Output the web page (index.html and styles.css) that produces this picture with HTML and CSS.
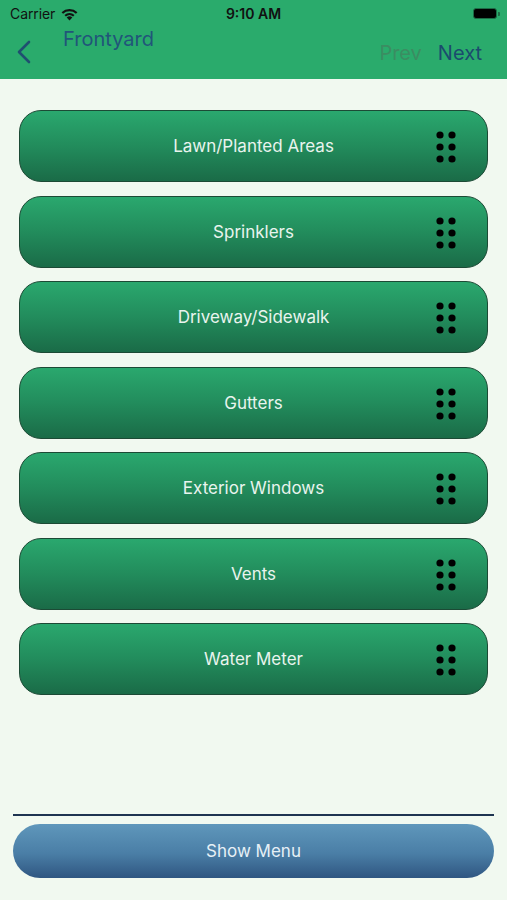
FILE: index.html
```html
<!DOCTYPE html>
<html>
<head>
<meta charset="utf-8">
<link rel="stylesheet" href="styles.css">
</head>
<body>
<div class="screen">
  <header class="header">
    <div class="status">
      <div class="status-left">
        <span class="carrier">Carrier</span>
        <svg class="wifi" width="19" height="14" viewBox="0 0 16 12">
          <path d="M8 11.5 L5.6 8.9 A3.6 3.6 0 0 1 10.4 8.9 Z" fill="#111"/>
          <path d="M3.7 6.9 A6.4 6.4 0 0 1 12.3 6.9 L11.1 8.2 A4.7 4.7 0 0 0 4.9 8.2 Z" fill="#111"/>
          <path d="M1.2 4.4 A10 10 0 0 1 14.8 4.4 L13.5 5.7 A8.2 8.2 0 0 0 2.5 5.7 Z" fill="#111"/>
        </svg>
      </div>
      <span class="time">9:10 AM</span>
      <div class="battery">
        <div class="battery-body"></div>
        <div class="battery-cap"></div>
      </div>
    </div>
    <nav class="navbar">
      <svg class="back" width="16" height="24" viewBox="0 0 16 24">
        <path d="M13 2 L3 12 L13 22" fill="none" stroke="#1f4f70" stroke-width="2.6" stroke-linecap="round" stroke-linejoin="round"/>
      </svg>
      <span class="title">Frontyard</span>
      <div class="nav-right">
        <span class="prev">Prev</span>
        <span class="next">Next</span>
      </div>
    </nav>
  </header>

  <main class="list">
    <div class="item"><span class="label">Lawn/Planted Areas</span><svg class="grip" width="22" height="34" viewBox="0 0 22 34"><circle cx="5" cy="5" r="3.6"/><circle cx="17" cy="5" r="3.6"/><circle cx="5" cy="17" r="3.6"/><circle cx="17" cy="17" r="3.6"/><circle cx="5" cy="29" r="3.6"/><circle cx="17" cy="29" r="3.6"/></svg></div>
    <div class="item"><span class="label">Sprinklers</span><svg class="grip" width="22" height="34" viewBox="0 0 22 34"><circle cx="5" cy="5" r="3.6"/><circle cx="17" cy="5" r="3.6"/><circle cx="5" cy="17" r="3.6"/><circle cx="17" cy="17" r="3.6"/><circle cx="5" cy="29" r="3.6"/><circle cx="17" cy="29" r="3.6"/></svg></div>
    <div class="item"><span class="label">Driveway/Sidewalk</span><svg class="grip" width="22" height="34" viewBox="0 0 22 34"><circle cx="5" cy="5" r="3.6"/><circle cx="17" cy="5" r="3.6"/><circle cx="5" cy="17" r="3.6"/><circle cx="17" cy="17" r="3.6"/><circle cx="5" cy="29" r="3.6"/><circle cx="17" cy="29" r="3.6"/></svg></div>
    <div class="item"><span class="label">Gutters</span><svg class="grip" width="22" height="34" viewBox="0 0 22 34"><circle cx="5" cy="5" r="3.6"/><circle cx="17" cy="5" r="3.6"/><circle cx="5" cy="17" r="3.6"/><circle cx="17" cy="17" r="3.6"/><circle cx="5" cy="29" r="3.6"/><circle cx="17" cy="29" r="3.6"/></svg></div>
    <div class="item"><span class="label">Exterior Windows</span><svg class="grip" width="22" height="34" viewBox="0 0 22 34"><circle cx="5" cy="5" r="3.6"/><circle cx="17" cy="5" r="3.6"/><circle cx="5" cy="17" r="3.6"/><circle cx="17" cy="17" r="3.6"/><circle cx="5" cy="29" r="3.6"/><circle cx="17" cy="29" r="3.6"/></svg></div>
    <div class="item"><span class="label">Vents</span><svg class="grip" width="22" height="34" viewBox="0 0 22 34"><circle cx="5" cy="5" r="3.6"/><circle cx="17" cy="5" r="3.6"/><circle cx="5" cy="17" r="3.6"/><circle cx="17" cy="17" r="3.6"/><circle cx="5" cy="29" r="3.6"/><circle cx="17" cy="29" r="3.6"/></svg></div>
    <div class="item"><span class="label">Water Meter</span><svg class="grip" width="22" height="34" viewBox="0 0 22 34"><circle cx="5" cy="5" r="3.6"/><circle cx="17" cy="5" r="3.6"/><circle cx="5" cy="17" r="3.6"/><circle cx="17" cy="17" r="3.6"/><circle cx="5" cy="29" r="3.6"/><circle cx="17" cy="29" r="3.6"/></svg></div>
  </main>

  <footer class="footer">
    <div class="divider"></div>
    <button class="menu-btn">Show Menu</button>
  </footer>
</div>
</body>
</html>
```

FILE: styles.css
```css
* { box-sizing: border-box; }

html, body {
  margin: 0;
  padding: 0;
}

body {
  font-family: Inter, "Noto Sans", "Liberation Sans", sans-serif;
  background: #f1f9f0;
}

.screen {
  width: 507px;
  height: 900px;
  display: flex;
  flex-direction: column;
  background: #f1f9f0;
}

.header {
  height: 79px;
  background: #2aab6c;
  display: flex;
  flex-direction: column;
}

.status {
  height: 27px;
  display: flex;
  align-items: center;
  justify-content: space-between;
  padding: 0 7px 0 10px;
  position: relative;
}

.status-left {
  display: flex;
  align-items: center;
  gap: 5px;
}

.carrier {
  font-size: 14px;
  color: #111;
  letter-spacing: -0.1px;
}

.time {
  position: absolute;
  left: 0;
  right: 0;
  text-align: center;
  font-size: 14px;
  font-weight: 600;
  color: #111;
}

.battery {
  display: flex;
  align-items: center;
  gap: 1px;
}

.battery-body {
  width: 24px;
  height: 11px;
  border-radius: 3px;
  background: #000;
  border: 1px solid #1d6b45;
}

.battery-cap {
  width: 2px;
  height: 4px;
  border-radius: 0 1px 1px 0;
  background: #1d6b45;
}

.navbar {
  flex: 1;
  display: flex;
  align-items: flex-start;
  padding: 0 25px 0 16px;
}

.back {
  margin-top: 13px;
}

.title {
  margin-left: 31px;
  margin-top: 0;
  font-size: 20px;
  color: #21557a;
}

.nav-right {
  margin-left: auto;
  margin-top: 14px;
  display: flex;
  gap: 16px;
  font-size: 20px;
}

.prev {
  color: #3b8d62;
}

.next {
  color: #1b4b6e;
}

.list {
  display: flex;
  flex-direction: column;
  gap: 13.5px;
  padding: 31px 19px 0 19px;
}

.item {
  height: 72px;
  border-radius: 22px;
  border: 1px solid #1c4a35;
  background: linear-gradient(to bottom, #2aa86e 0%, #228c5c 50%, #1a6b47 100%);
  display: flex;
  align-items: center;
  justify-content: center;
  position: relative;
}

.label {
  font-size: 17px;
  color: #e9f4ee;
}

.grip {
  position: absolute;
  right: 30px;
  top: 19px;
  fill: #000;
}

.footer {
  margin-top: auto;
  padding: 0 13px 22px 13px;
  display: flex;
  flex-direction: column;
}

.divider {
  height: 2px;
  background: #1e3451;
  margin-bottom: 8px;
}

.menu-btn {
  height: 54px;
  border: none;
  border-radius: 27px;
  background: linear-gradient(to bottom, #5f97bb 0%, #4a7ea6 55%, #2f5681 100%);
  font-family: Inter, "Noto Sans", "Liberation Sans", sans-serif;
  font-size: 17px;
  color: #e6f0f6;
  padding: 0;
}
```
